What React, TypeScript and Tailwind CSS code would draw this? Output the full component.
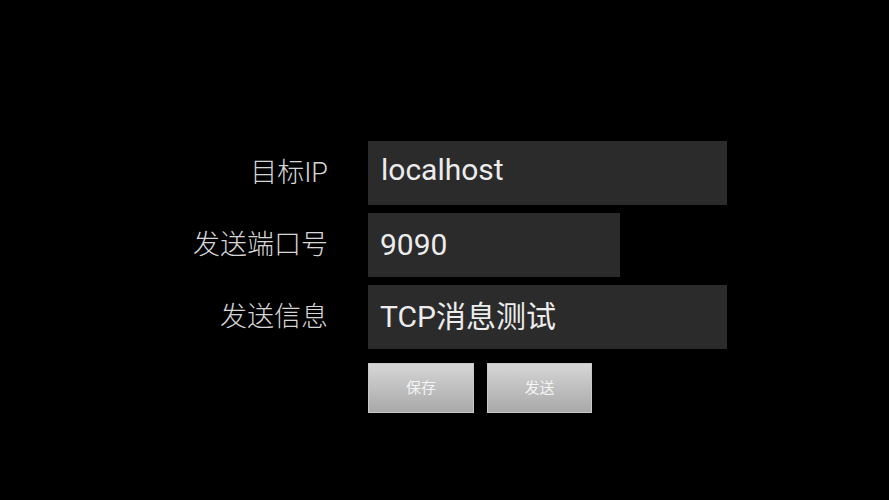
import React from "react";

const cjk = { fontFamily: 'Roboto, "Noto Sans CJK SC", sans-serif' };

function Row({
  label,
  value,
  width,
  textClass,
}: {
  label: string;
  value: string;
  width: string;
  textClass: string;
}) {
  return (
    <div className="flex items-center h-16 gap-10">
      <div
        className="w-[328px] text-right text-[27px] font-light text-[#d6d6d6] leading-none"
        style={cjk}
      >
        {label}
      </div>
      <div className={`${width} h-16 bg-[#2b2b2b] flex items-center pl-3`}>
        <span
          className={`text-[30px] text-[#ececec] leading-[36px] ${textClass}`}
          style={cjk}
        >
          {value}
        </span>
      </div>
    </div>
  );
}

export default function App() {
  return (
    <div className="w-[889px] h-[500px] bg-black overflow-hidden">
      <div className="pt-[141px] flex flex-col gap-2">
        <Row label="目标IP" value="localhost" width="w-[359px]" textClass="pl-px -translate-y-[3px]" />
        <Row label="发送端口号" value="9090" width="w-[252px]" textClass="" />
        <Row label="发送信息" value="TCP消息测试" width="w-[359px]" textClass="" />
        <div className="flex gap-10 mt-[6px]">
          <div className="w-[328px]" />
          <div className="flex gap-[13px]">
            <button
              className="w-[106px] h-[50px] bg-gradient-to-b from-[#d6d6d6] to-[#a9a9a9] border border-[#c8c8c8] text-[15px] text-[#f4f4f4] flex items-center justify-center"
              style={cjk}
            >
              保存
            </button>
            <button
              className="w-[105px] h-[50px] bg-gradient-to-b from-[#d6d6d6] to-[#a9a9a9] border border-[#c8c8c8] text-[15px] text-[#f4f4f4] flex items-center justify-center"
              style={cjk}
            >
              发送
            </button>
          </div>
        </div>
      </div>
    </div>
  );
}
